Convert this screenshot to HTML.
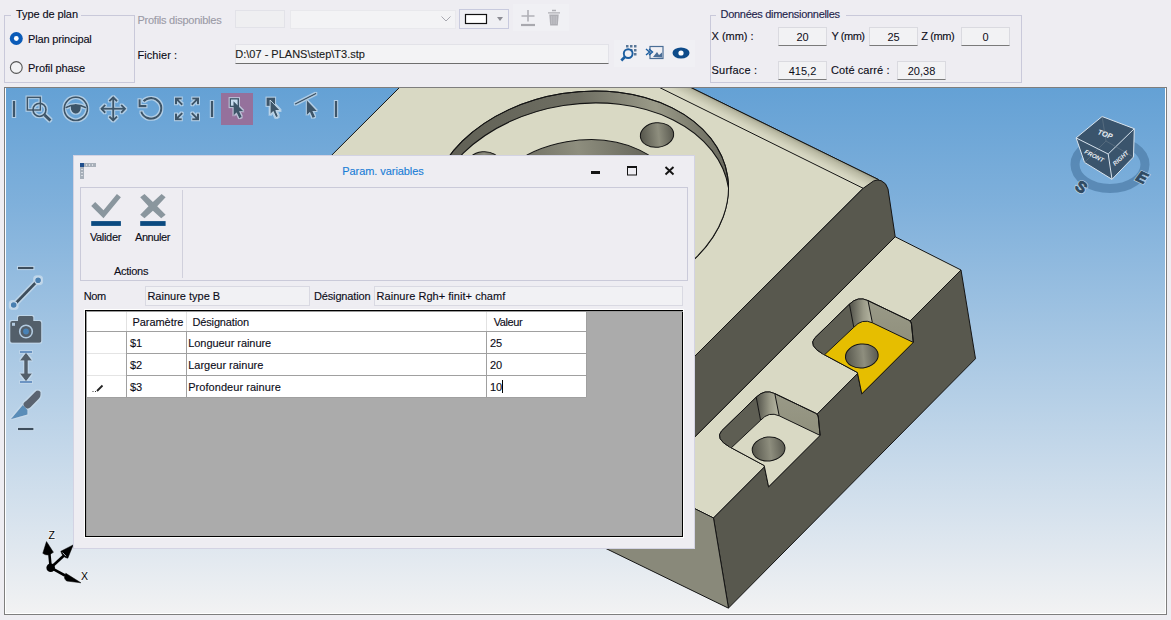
<!DOCTYPE html>
<html><head><meta charset="utf-8">
<style>
*{box-sizing:border-box}
html,body{margin:0;padding:0}
body{width:1171px;height:620px;position:relative;overflow:hidden;background:#EEEDF2;font-family:"Liberation Sans",sans-serif;font-size:11px;letter-spacing:0;color:#0C0C18}
.t{position:absolute;line-height:13px;white-space:nowrap;-webkit-text-stroke:0.12px currentColor}
.b{position:absolute}
.grp{position:absolute;border:1px solid #C9C9DA}
.fld{position:absolute;background:#F2F2F4;border:1px solid #DADAE0;border-bottom:1px solid #7A7A7A;text-align:center;line-height:18px}
.sv{position:absolute;left:0;top:0}
</style></head><body>

<!-- ===== TOP PANEL ===== -->
<div class="grp" style="left:4px;top:15px;width:131px;height:68px"></div>
<div class="b" style="left:11px;top:10px;width:70px;height:10px;background:#EEEDF2"></div>
<div class="t" style="left:16px;top:8px;letter-spacing:-0.09px">Type de plan</div>
<svg class="sv" width="140" height="90" style="left:0;top:0">
  <circle cx="16.3" cy="38.5" r="6.5" fill="#0A5BB8"/>
  <circle cx="16.3" cy="38.5" r="2.4" fill="#fff"/>
  <circle cx="16.3" cy="67.5" r="5.9" fill="#F2F2F4" stroke="#555" stroke-width="1.1"/>
</svg>
<div class="t" style="left:28.1px;top:33px;letter-spacing:-0.18px">Plan principal</div>
<div class="t" style="left:28.1px;top:62px;letter-spacing:-0.1px">Profil phase</div>

<div class="t" style="left:137.5px;top:14px;color:#9A9AA6;letter-spacing:-0.25px">Profils disponibles</div>
<div class="b" style="left:235px;top:10px;width:50px;height:18px;background:#EFEFF1;border:1px solid #E2E2E8"></div>
<div class="b" style="left:290px;top:10px;width:166px;height:19px;background:#F3F3F5;border:1px solid #E8E8EC"></div>
<svg class="sv" width="700" height="40">
  <path d="M441.5 16.5 L446 21 L450.5 16.5" fill="none" stroke="#A8A8B0" stroke-width="1"/>
  <rect x="459.5" y="9.5" width="49" height="19" fill="#EFEFF3" stroke="#C8CADE"/>
  <rect x="465.5" y="14.5" width="21" height="9" fill="#fff" stroke="#111" stroke-width="1.2"/>
  <path d="M497 17 L503 17 L500 21 Z" fill="#8C8C94"/>
  <rect x="513" y="4" width="56" height="27" fill="#F0F0F4"/>
  <path d="M521 25 H535" stroke="#A8A8AE" stroke-width="2.2"/><path d="M528 10 V21.5 M521.5 16 H534.5" stroke="#B0B0B6" stroke-width="1.6" fill="none"/>
  <path d="M548 12.8 H560 M552 10.5 H556" stroke="#AEAEB4" stroke-width="1.3"/><path d="M549.3 14.5 L550.2 25.5 H557.8 L558.7 14.5 Z" fill="#AEAEB4"/><path d="M551.8 16 V24 M554 16 V24 M556.2 16 V24" stroke="#CFCFD4" stroke-width="0.7"/>
</svg>

<div class="t" style="left:137.5px;top:49px;letter-spacing:0.06px">Fichier :</div>
<div class="b" style="left:235px;top:44px;width:374px;height:20px;background:#F3F3F5;border:1px solid #E2E2E8;border-bottom:1px solid #6E6E6E"></div>
<div class="t" style="left:235.3px;top:48px;color:#1A1A1A;letter-spacing:0.0px">D:\07 - PLANS\step\T3.stp</div>
<svg class="sv" width="700" height="70">
  <rect x="614" y="40" width="81" height="27" fill="#F0F0F4"/>
  <path d="M626 45h2.5v2.5h-2.5zM630 45h2.5v2.5h-2.5zM634 45h2.5v2.5h-2.5zM630 49h2.5v2.5h-2.5zM634 49h2.5v2.5h-2.5zM634 53h2.5v2.5h-2.5z" fill="#5A7898"/>
  <circle cx="628.2" cy="53.6" r="4.4" fill="#F0F0F4" fill-opacity="0.6" stroke="#1B5EA0" stroke-width="1.9"/>
  <path d="M624.8 57 L621.3 60.5" stroke="#1B5EA0" stroke-width="2.6"/>
  <rect x="650" y="46.5" width="13" height="12" fill="none" stroke="#4A6E96" stroke-width="1.2"/>
  <path d="M646 49 L649.5 52 L646 55 M649 49 L652.5 52 L649 55" fill="none" stroke="#1B5EA0" stroke-width="1.4"/>
  <path d="M653 57 L657 52 L659 55 L662 52.5 V57.5 Z" fill="#4A6E96"/>
  <ellipse cx="681" cy="53" rx="8.5" ry="5.5" fill="#0E4C8A"/>
  <circle cx="681" cy="53" r="2.6" fill="#fff"/>
</svg>

<div class="grp" style="left:710px;top:15px;width:312px;height:68px"></div>
<div class="b" style="left:716px;top:10px;width:130px;height:10px;background:#EEEDF2"></div>
<div class="t" style="left:720.5px;top:8px;color:#23234A;letter-spacing:-0.29px">Données dimensionnelles</div>
<div class="t" style="left:711.6px;top:30px;letter-spacing:-0.04px">X (mm) :</div>
<div class="fld" style="left:778px;top:27px;width:49px;height:19px">20</div>
<div class="t" style="left:831.4px;top:30px;letter-spacing:-0.44px">Y (mm)</div>
<div class="fld" style="left:869px;top:27px;width:49px;height:19px">25</div>
<div class="t" style="left:921.2px;top:30px;letter-spacing:-0.4px">Z (mm)</div>
<div class="fld" style="left:961px;top:27px;width:49px;height:19px">0</div>
<div class="t" style="left:711.6px;top:64px;letter-spacing:0.19px">Surface :</div>
<div class="fld" style="left:778px;top:61px;width:49px;height:19px">415,2</div>
<div class="t" style="left:831px;top:64px;letter-spacing:0.09px">Coté carré :</div>
<div class="fld" style="left:897px;top:61px;width:49px;height:19px">20,38</div>

<!-- ===== VIEWPORT ===== -->
<div class="b" style="left:4px;top:87px;width:1163px;height:528px;border:1px solid #7E7E7E;background:linear-gradient(#64A1D5 0%,#7FB0DB 22%,#F2F2F3 100%)"></div>
<div class="b" style="left:5px;top:88px;width:1161px;height:526px;border:1px solid #fff;border-top:0"></div>

<!-- MODEL -->
<svg class="sv" width="1171" height="620">
<defs>
 <clipPath id="vp"><rect x="5" y="88" width="1161" height="526"/></clipPath>
 <linearGradient id="fil" gradientUnits="userSpaceOnUse" x1="760" y1="137" x2="766.4" y2="124.1"><stop offset="0" stop-color="#DADAC5"/><stop offset="0.3" stop-color="#D3D3BE"/><stop offset="0.75" stop-color="#BBBBA5"/><stop offset="1" stop-color="#9E9E88"/></linearGradient>
 <linearGradient id="wallg" x1="0" y1="0" x2="1" y2="0"><stop offset="0" stop-color="#5E5E53"/><stop offset="0.55" stop-color="#6E6E62"/><stop offset="0.8" stop-color="#9A9A88"/><stop offset="1" stop-color="#6A6A5E"/></linearGradient>
 <linearGradient id="holeg" x1="0" y1="0" x2="1" y2="0"><stop offset="0" stop-color="#55554B"/><stop offset="0.55" stop-color="#8E8E7E"/><stop offset="1" stop-color="#5A5A50"/></linearGradient>
 <linearGradient id="cfil" x1="0" y1="0" x2="1" y2="0"><stop offset="0" stop-color="#505048"/><stop offset="0.6" stop-color="#9A9A88"/><stop offset="1" stop-color="#B8B8A4"/></linearGradient>
 <linearGradient id="bwall" x1="0" y1="0" x2="0" y2="1"><stop offset="0" stop-color="#9A9A88"/><stop offset="1" stop-color="#84846F"/></linearGradient>
 <clipPath id="rimclip"><ellipse cx="579.1" cy="199.4" rx="150.3" ry="107.2" transform="rotate(-9 579.1 199.4)"/></clipPath>
<g id="pk" stroke="#141414" stroke-width="1" stroke-linejoin="round">
  <path d="M822.7 353.9 Q808 345.5 814.8 337.9 L849.4 304.2 Q857.9 295.7 868 300.6 L908.8 320.2 Q911.5 321.5 911.5 324 L913.3 342.4 L861.8 393.8 L857.4 372.5 Z" fill="url(#bwall)"/>
  <path d="M822.7 353.9 Q808 345.5 814.8 337.9 L849.4 304.2 L853.8 327.3 L824.5 354.8 Z" fill="#5E5E53" stroke="none"/>
  <path d="M849.4 304.2 Q857.9 295.7 868 300.6 L872.4 322.8 Q862 318 853.8 327.3 Z" fill="url(#cfil)" stroke="none"/>
  <path d="M849.4 304.2 L853.8 327.3 M868 300.6 L872.4 322.8" fill="none"/>
  <path d="M822.7 353.9 Q808 345.5 814.8 337.9 L849.4 304.2 Q857.9 295.7 868 300.6 L908.8 320.2 Q911.5 321.5 911.5 324 L913.3 342.4" fill="none"/>
  <path d="M824.5 354.8 L853.8 327.3 Q862 318 872.4 322.8 L913.3 342.4 L861.8 393.8 L857.4 372.5 Z" fill="var(--fl)"/>
  <ellipse cx="861.8" cy="356" rx="16.4" ry="12" transform="rotate(-6 861.8 356)" fill="url(#holeg)"/>
</g>
</defs>
<g clip-path="url(#vp)" stroke="#141414" stroke-width="1" stroke-linejoin="round">
 <!-- upper top face -->
 <path d="M407 80 L675.5 80 L878.5 179.6 L863.2 188.3 L635.4 415.4 L259.4 227.4 Z" fill="#D9D9C4"/>
 <!-- fillet band -->
 <path d="M644.4 80 L675.5 80 L878.5 179.6 L873.5 181 L863.2 188.3 Z" fill="url(#fil)" stroke="none"/>
 <path d="M644.4 80 L863.2 188.3" fill="none"/>
 <path d="M675.5 80 L878.5 179.6" fill="none"/>
 <!-- counterbore -->
 <ellipse cx="579.1" cy="199.4" rx="150.3" ry="107.2" transform="rotate(-9 579.1 199.4)" fill="url(#wallg)"/>
 <g clip-path="url(#rimclip)">
  <ellipse cx="580.1" cy="211.4" rx="150.3" ry="107.2" transform="rotate(-9 580.1 211.4)" fill="#D9D9C4" stroke="#141414" stroke-width="1.1"/>
 </g>
 <ellipse cx="579.1" cy="199.4" rx="150.3" ry="107.2" transform="rotate(-9 579.1 199.4)" fill="none"/>
 <!-- center bore -->
 <ellipse cx="579" cy="212" rx="99.7" ry="71.3" transform="rotate(-10 579 212)" fill="url(#holeg)"/>
 <!-- small holes -->
 <ellipse cx="657" cy="135" rx="16.7" ry="12.3" transform="rotate(-6 657 135)" fill="url(#holeg)"/>
 <ellipse cx="483.5" cy="164" rx="16.7" ry="12.3" transform="rotate(-6 483.5 164)" fill="url(#holeg)"/>
 <!-- upper step front face -->
 <path d="M863.2 188.3 L873.5 181 Q877 179.2 881 180.6 Q886.5 183 888 189 L895.2 236.8 L647 484.8 L635.4 415.4 Z" fill="#58584E"/>
 <!-- lower step top face -->
 <path d="M895.2 236.8 L961 270 L713.5 518 L647 484.8 Z" fill="#D9D9C4"/>
 <!-- lower front face -->
 <path d="M961 270 L975.5 358.7 L728.5 608 L713.5 518 Z" fill="#58584E"/>
<use href="#pk" style="--fl:#E6BE00"/>
<use href="#pk" transform="translate(-93.2 93)" style="--fl:#D9D9C4"/>
 <!-- left end face -->
 <path d="M635.4 415.4 L647 484.8 L713.5 518 L728.5 608.2 L286 392.7 L259.4 227.4 Z" fill="#89897A"/>
</g>
</svg>

<!-- ICONS -->
<svg class="sv" width="1171" height="620">
 <defs>
  <filter id="halo" x="-20%" y="-20%" width="140%" height="140%">
   <feMorphology in="SourceAlpha" operator="dilate" radius="1" result="d"/>
   <feFlood flood-color="#C9DCEC" flood-opacity="0.75"/>
   <feComposite in2="d" operator="in" result="h"/>
   <feMerge><feMergeNode in="h"/><feMergeNode in="SourceGraphic"/></feMerge>
  </filter>
 </defs>
 <rect x="221" y="93" width="32" height="32" fill="#95719C"/>
 <g filter="url(#halo)" fill="none" stroke="#3C5569" stroke-width="1.8">
  <path d="M14 101 V117" stroke-width="2.4"/>
  <rect x="27.3" y="97.3" width="13" height="12.7" stroke-width="1.6"/>
  <circle cx="39.5" cy="109.8" r="6.5" stroke-width="1.8"/>
  <path d="M44.5 114.8 L50.5 120.6" stroke-width="3"/>
  <circle cx="75.8" cy="108.8" r="11.6" stroke-width="1.8"/>
  <path d="M65.5 107.8 Q75.8 102 86 107.8" stroke-width="1.7"/>
  <path d="M70.8 105.6 Q75.8 104.6 80.8 105.6 L80.8 108 A5 5.8 0 0 1 70.8 108 Z" fill="#3C5569" stroke="none"/>
  <path d="M113.2 97.5 V120.5 M101.5 108.8 H125" stroke-width="2"/>
  <path d="M109.3 101.3 L113.2 97.5 L117.1 101.3 M109.3 116.5 L113.2 120.3 L117.1 116.5 M105.3 104.9 L101.5 108.8 L105.3 112.7 M121.1 104.9 L125 108.8 L121.1 112.7" stroke-width="2"/>
  <path d="M141.2 111.5 A10.3 10.3 0 1 0 143.5 101.3" stroke-width="2.2"/>
  <path d="M139.6 99.3 V106.2 H146.5" stroke-width="2.2"/>
  <path d="M176 104.3 V98.5 H181.8 M176 98.5 L182.3 104.8 M198 104.3 V98.5 H192.2 M198 98.5 L191.7 104.8 M176 113.5 V119.3 H181.8 M176 119.3 L182.3 113 M198 113.5 V119.3 H192.2 M198 119.3 L191.7 113" stroke-width="2"/>
  <path d="M212 101 V117" stroke-width="2.4"/>
  <path d="M336 101 V117" stroke-width="2.4"/>
  <rect x="230.3" y="98.8" width="8" height="7.6" fill="#C8DCEE" stroke-width="1.4"/>
  <path d="M233.5 101.3 V115.5 L236.6 112.4 L239.3 118.3 L241.8 117.1 L239.2 111.3 L243.5 111.3 Z" fill="#3C5569" stroke="none"/>
  <rect x="266.5" y="97.6" width="8.6" height="8.3" fill="#3C5569" stroke="none"/>
  <path d="M270.1 100 V114.6 L273.2 111.5 L275.9 117.6 L278.4 116.4 L275.8 110.5 L280.2 110.5 Z" fill="#3C5569" stroke="#C9DCEC" stroke-width="0.9"/>
  <path d="M295 104.1 L316.2 93.3" stroke-width="1.5"/>
  <path d="M306.8 100.3 V115 L309.9 111.9 L312.6 118 L315.1 116.8 L312.5 110.9 L316.9 110.9 Z" fill="#3C5569" stroke="none"/>
  <!-- side icons -->
  <path d="M18 268 H33.5" stroke="#3C4E5C" stroke-width="2.2"/>
  <path d="M14 305 L38 280.3" stroke="#3C4E5C" stroke-width="3"/>
  <circle cx="13.7" cy="305" r="3.4" fill="#4A7FB0" stroke="#C9DCEC" stroke-width="1.2"/>
  <circle cx="38.1" cy="280.3" r="3.4" fill="#4A7FB0" stroke="#C9DCEC" stroke-width="1.2"/>
  <path d="M12 321 H18 V317.5 Q18 316 19.5 316 H32 Q33.4 316 33.4 317.5 V321 H39.5 Q41.3 321 41.3 323 V341 Q41.3 342.8 39.5 342.8 H12 Q10.2 342.8 10.2 341 V323 Q10.2 321 12 321 Z" fill="#535F6B" stroke="none"/>
  <circle cx="26" cy="331.5" r="6.3" fill="#535F6B" stroke="#B3CBE0" stroke-width="1.6"/>
  <circle cx="26" cy="331.5" r="2.9" fill="#4A82B5" stroke="none"/>
  <rect x="12" y="322.8" width="3" height="3" fill="#B3CBE0" stroke="none"/>
  <path d="M20 352 H32 M20 382 H32" stroke="#3A78B5" stroke-width="1.5"/>
  <path d="M26 355 V379" stroke="#535F6B" stroke-width="3.6"/>
  <path d="M20 360.5 L26 352.8 L32 360.5 Z M20 373.5 L26 381.2 L32 373.5 Z" fill="#535F6B" stroke="none"/>
  <path d="M26.5 400.5 L35 392 Q37.8 389.2 40.6 392 L40.6 395 Q40.6 397 38.6 399 L30.5 407.3 Q27.6 410 24.8 407.3 L24 406.3 Q21.8 403.3 26.5 400.5 Z" fill="#5A6470" stroke="none"/>
  <path d="M10.8 419.2 L22.8 405 L27.5 410 V414.5 Z" fill="#5A8DB8" stroke="none"/>
  <path d="M18 429 H33.5" stroke="#3C4E5C" stroke-width="2.2"/>
 </g>
 <!-- triad -->
 <g fill="#000" stroke="#000">
  <path d="M50.7 567.7 L49.3 553" stroke-width="2.6"/>
  <path d="M46.5 541.6 L42.8 553.3 Q47.5 557 53.4 552.3 Z" stroke-width="0.5"/>
  <path d="M50.7 567.7 L64 555.5" stroke-width="2.6"/>
  <path d="M73.2 544.9 L60.8 551.3 Q62.5 557.5 67.8 558.2 Z" stroke-width="0.5"/>
  <path d="M50.7 567.7 L65 575.5" stroke-width="2.6"/>
  <path d="M80.9 582.8 L65.8 573.3 Q62.8 578 66.6 581 Z" stroke-width="0.5"/>
  <circle cx="50.7" cy="567.7" r="4.3" stroke="none"/>
 </g>
 <path d="M62.6 552.6 L66 556.2" stroke="#DDE5EC" stroke-width="0.8"/>
 <text x="48.6" y="539" font-family="Liberation Sans" font-size="10.5" fill="#000" stroke="#F2F4F6" stroke-width="1.6" paint-order="stroke" letter-spacing="0">Z</text>
 <text x="81" y="579.6" font-family="Liberation Sans" font-size="10.5" fill="#000" stroke="#F2F4F6" stroke-width="1.6" paint-order="stroke" letter-spacing="0">X</text>
 <!-- view cube -->
 <ellipse cx="1110" cy="164.5" rx="35" ry="24" fill="none" stroke="#4D7DA8" stroke-opacity="0.72" stroke-width="9"/>
 <path d="M1102.1 116.5 L1134.3 128.7 L1133.5 157 L1112 179.3 L1084.5 162.4 L1076.1 137.9 Z" fill="#3A546C" stroke="#D9E4EE" stroke-width="1"/>
 <path d="M1076.1 137.9 L1108.2 154 L1134.3 128.7 M1108.2 154 L1112 179.3" fill="none" stroke="#D9E4EE" stroke-width="1"/>
 <path d="M1102.1 116.5 L1106 141 L1084.5 162.4 M1106 141 L1133.5 157" fill="none" stroke="#7A8A96" stroke-width="0.6" opacity="0.7"/>
 <text transform="translate(1097 134) rotate(20)" font-family="Liberation Sans" font-size="7.5" font-style="italic" font-weight="bold" fill="#E8EEF4" letter-spacing="0">TOP</text>
 <text transform="translate(1084 153) rotate(27)" font-family="Liberation Sans" font-size="6" font-style="italic" font-weight="bold" fill="#E8EEF4" letter-spacing="0">FRONT</text>
 <text transform="translate(1115 166) rotate(-42)" font-family="Liberation Sans" font-size="6" font-style="italic" font-weight="bold" fill="#E8EEF4" letter-spacing="0">RIGHT</text>
 <g font-family="Liberation Sans" font-size="15.5" font-weight="bold" text-anchor="middle" letter-spacing="0">
  <text transform="translate(1081.5 186.8) rotate(36)" dy="5.6" fill="none" stroke="#C6DAEA" stroke-width="2.4" stroke-opacity="0.8">S</text>
  <text transform="translate(1081.5 186.8) rotate(36)" dy="5.6" fill="#2F4A62" stroke="#2F4A62" stroke-width="0.9">S</text>
  <text transform="translate(1142.3 177.2) matrix(0.906 0.423 -0.593 0.805 0 0)" dy="5.6" fill="none" stroke="#C6DAEA" stroke-width="2.4" stroke-opacity="0.8">E</text>
  <text transform="translate(1142.3 177.2) matrix(0.906 0.423 -0.593 0.805 0 0)" dy="5.6" fill="#2F4A62" stroke="#2F4A62" stroke-width="0.9">E</text>
 </g>
</svg>

<!-- DIALOG -->
<div class="b" style="left:73px;top:155px;width:622px;height:394px;background:#EEEDF2;border:1px solid #D3D3E3"></div>
<svg class="sv" width="700" height="560">
  <rect x="80" y="163" width="4" height="4" fill="#1F4E8C"/>
  <rect x="84" y="163" width="12" height="4" fill="#A8B0BA"/>
  <path d="M86 164h1v2h-1zM89 164h1v2h-1zM92 164h1v2h-1z" fill="#D8DCE2"/>
  <rect x="80" y="167" width="4" height="12" fill="#A8B0BA"/>
  <path d="M81 169h2v1h-2zM81 172h2v1h-2zM81 175h2v1h-2z" fill="#D8DCE2"/>
  <rect x="591" y="171" width="9" height="3" fill="#141414"/>
  <rect x="627.5" y="166.5" width="9" height="8.5" fill="none" stroke="#141414" stroke-width="1"/>
  <rect x="627" y="166" width="10" height="2" fill="#141414"/>
  <path d="M665.5 167 L673.5 174.5 M673.5 167 L665.5 174.5" stroke="#141414" stroke-width="1.9"/>
  <rect x="80.5" y="187.5" width="607" height="93" fill="none" stroke="#CACAD9"/>
  <path d="M182.5 190 V278" stroke="#D0D0DC"/>
  <path d="M91.2 206 L95.2 202 L103.5 210.3 L116.9 194 L120.9 197.3 L103.5 218.3 Z" fill="#8A969E"/>
  <rect x="91.2" y="221.1" width="29.7" height="4.8" fill="#0B4A80"/>
  <path d="M140.2 197.3 L144.5 194 L152.9 202 L161.6 194 L165.6 197.3 L157.2 206.3 L165.6 214.7 L161.2 218.3 L152.9 210.7 L144.5 218.3 L140.2 214.7 L148.5 206.3 Z" fill="#8A969E"/>
  <rect x="140.2" y="221.1" width="25.4" height="4.8" fill="#0B4A80"/>
</svg>
<div class="t" style="left:342.3px;top:165px;color:#1A7DD6;letter-spacing:-0.07px">Param. variables</div>
<div class="t" style="left:89.9px;top:231px;letter-spacing:-0.33px">Valider</div>
<div class="t" style="left:135px;top:231px;letter-spacing:-0.43px">Annuler</div>
<div class="t" style="left:114px;top:265px;letter-spacing:-0.28px">Actions</div>
<div class="t" style="left:83.7px;top:290px;letter-spacing:-0.4px">Nom</div>
<div class="b" style="left:145px;top:286px;width:165px;height:20px;background:#F1F1F4;border:1px solid #D9D9E2"></div>
<div class="t" style="left:147.4px;top:290px;letter-spacing:0.0px">Rainure type B</div>
<div class="t" style="left:314px;top:290px;letter-spacing:-0.15px">Désignation</div>
<div class="b" style="left:374px;top:286px;width:309px;height:20px;background:#F1F1F4;border:1px solid #D9D9E2"></div>
<div class="t" style="left:376.5px;top:290px;letter-spacing:0.04px">Rainure Rgh+ finit+ chamf</div>
<!-- grid -->
<div class="b" style="left:84px;top:309px;width:600px;height:229px;border:1px solid #fff"></div>
<div class="b" style="left:85px;top:310px;width:598px;height:227px;background:#ABABAB;border:1px solid #000"></div>
<svg class="sv" width="700" height="560">
  <rect x="86" y="311" width="500.5" height="86.5" fill="#fff"/>
  <path d="M86 331.5 H586.5 M86 353.5 H586.5 M86 375.5 H586.5 M86 397.5 H586.5" stroke="#A0A0A0"/>
  <path d="M86 353.5 H126 M86 375.5 H126" stroke="#E4E4E4"/>
  <path d="M126.5 311 V397.5 M186.5 311 V397.5 M486.5 311 V397.5 M586.5 311 V397.5" stroke="#A0A0A0"/>
  <path d="M126.5 312 V331 M186.5 312 V331 M486.5 312 V331" stroke="#E2E2E2"/>
  <path d="M86 311.5 H683" stroke="#9A9A9A" stroke-width="1"/>
  <path d="M86.5 311 V536" stroke="#9A9A9A" stroke-width="1"/>
  <path d="M92.5 391.5h1M95 391.5h1" stroke="#333"/>
  <path d="M97 391 L102.5 385.5" stroke="#222" stroke-width="1.8"/>
  <path d="M502.5 380 V393" stroke="#000"/>
</svg>
<div class="t" style="left:132.5px;top:316px;letter-spacing:-0.06px">Paramètre</div>
<div class="t" style="left:192.5px;top:316px;letter-spacing:-0.15px">Désignation</div>
<div class="t" style="left:493.7px;top:316px;letter-spacing:-0.4px">Valeur</div>
<div class="t" style="left:130px;top:337px">$1</div>
<div class="t" style="left:188.2px;top:337px;letter-spacing:-0.05px">Longueur rainure</div>
<div class="t" style="left:490px;top:337px">25</div>
<div class="t" style="left:130px;top:359px">$2</div>
<div class="t" style="left:188.2px;top:359px;letter-spacing:-0.01px">Largeur rainure</div>
<div class="t" style="left:490px;top:359px">20</div>
<div class="t" style="left:130px;top:381px">$3</div>
<div class="t" style="left:188.2px;top:381px;letter-spacing:0.05px">Profondeur rainure</div>
<div class="t" style="left:490px;top:381px">10</div>


</body></html>
